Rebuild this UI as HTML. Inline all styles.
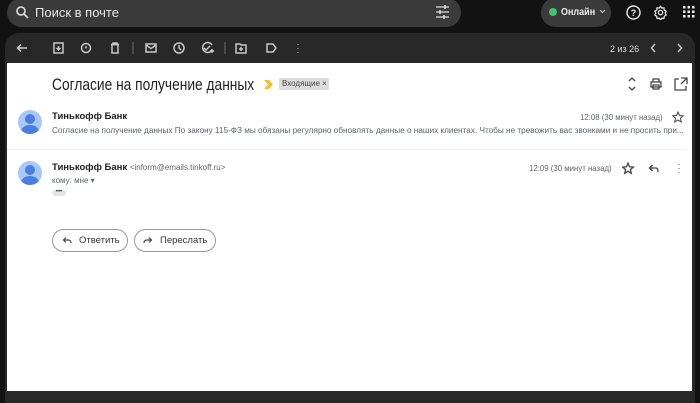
<!DOCTYPE html>
<html><head><meta charset="utf-8"><style>
*{margin:0;padding:0;box-sizing:border-box}
body{width:700px;height:403px;background:#121212;font-family:"Liberation Sans",Arial,sans-serif;position:relative;overflow:hidden}
.abs{position:absolute}
.search{left:7px;top:-2px;width:454px;height:29px;background:#3a3a3a;border-radius:15px}
.search .t{left:28px;top:7px;font-size:13px;color:#e8e8e8}
.pill{left:541px;top:-2px;width:70px;height:29px;background:#3a3a3a;border-radius:15px}
.panel{left:5px;top:33px;width:690px;height:370px;background:#282828;border-radius:14px 14px 0 0}
.white{left:7px;top:63px;width:685px;height:328px;background:#fff}
svg{position:absolute}
.ic{stroke:#c8c8c8;fill:none;stroke-width:1.5}
.g{color:#5f6368}
.sx{transform-origin:0 0;white-space:nowrap}
</style></head><body>
<div class="abs search">
<svg style="left:9px;top:8px" width="13" height="13" viewBox="0 0 13 13"><circle cx="5" cy="5" r="4" stroke="#e0e0e0" stroke-width="1.6" fill="none"/><path d="M8 8l4 4" stroke="#e0e0e0" stroke-width="1.6"/></svg>
<div class="abs t">Поиск в почте</div>
<svg style="left:428px;top:7px" width="15" height="14" viewBox="0 0 15 14"><path d="M1 2h13M1 7h13M1 12h13" stroke="#ddd" stroke-width="1.3"/><path d="M10 0v4M5 5v4M9 10v4" stroke="#ddd" stroke-width="1.6"/></svg>
</div>
<div class="abs pill">
<div class="abs" style="left:8px;top:10px;width:8px;height:8px;border-radius:50%;background:#3ec46d"></div>
<div class="abs sx" style="left:20px;top:9px;font-size:10px;color:#eee;font-weight:bold;transform:scaleX(0.9)">Онлайн</div>
<svg style="left:58px;top:11px" width="7" height="5"><path d="M1 1l2.5 2.5L6 1" stroke="#ccc" fill="none"/></svg>
</div>
<svg style="left:626px;top:5px" width="15" height="15" viewBox="0 0 15 15"><circle cx="7.5" cy="7.5" r="6.5" stroke="#eee" stroke-width="1.4" fill="none"/><text x="7.5" y="11" font-size="9" fill="#eee" text-anchor="middle" font-family="Liberation Sans" font-weight="bold">?</text></svg>
<svg style="left:653px;top:5px" width="15" height="15" viewBox="0 0 24 24"><path d="M12 2l2 3 3.5-.5.5 3.5 3 2-1.5 3 1.5 3-3 2-.5 3.5-3.5-.5-2 3-2-3-3.5.5-.5-3.5-3-2 1.5-3-1.5-3 3-2 .5-3.5 3.5.5z" stroke="#eee" stroke-width="2" fill="none"/><circle cx="12" cy="12" r="3.5" stroke="#eee" stroke-width="2" fill="none"/></svg>
<svg style="left:683px;top:6px" width="12" height="12"><g fill="#eee"><rect x="0" y="0" width="2.5" height="2.5"/><rect x="4.5" y="0" width="2.5" height="2.5"/><rect x="9" y="0" width="2.5" height="2.5"/><rect x="0" y="4.5" width="2.5" height="2.5"/><rect x="4.5" y="4.5" width="2.5" height="2.5"/><rect x="9" y="4.5" width="2.5" height="2.5"/><rect x="0" y="9" width="2.5" height="2.5"/><rect x="4.5" y="9" width="2.5" height="2.5"/><rect x="9" y="9" width="2.5" height="2.5"/></g></svg>
<div class="abs panel"></div>
<svg style="left:0;top:38px" width="700" height="20">
<g class="ic">
<path d="M27 10h-9M21 6.5L17.5 10 21 13.5"/>
<rect x="54" y="5" width="9" height="10"/><path d="M58.5 8v4M56.5 10l2 2 2-2"/>
<circle cx="86" cy="10" r="4.5"/><path d="M86 8v2.5"/>
<path d="M111 6.5h8M113 6v-1h4v1"/><rect x="112" y="6.5" width="6" height="8.5"/>
<path d="M133 4v12" stroke="#555"/>
<rect x="146" y="6" width="10" height="8"/><path d="M146 7l5 3.5 5-3.5"/>
<circle cx="179" cy="10" r="5"/><path d="M179 7v3l2 2"/>
<path d="M212 7a5 5 0 1 0 0 5"/><path d="M204 10l2 2 4-4M210 13h4M212 11v4"/>
<path d="M225 4v12" stroke="#555"/>
<path d="M236 6h4l1 1h5v8h-10z"/><path d="M241 9v4M239 11h4"/>
<path d="M267 6h6l3 4-3 4h-6z"/>
<path d="M298 6v0.5M298 10v0.5M298 14v0.5" stroke-width="2"/>
<path d="M655 6l-3.5 4 3.5 4M678 6l3.5 4-3.5 4"/>
</g>
<text x="610" y="14" font-size="9" fill="#ddd" font-family="Liberation Sans">2 из 26</text>
</svg>
<div class="abs white"></div>
<div class="abs sx" style="left:52px;top:75px;font-size:17px;color:#1f1f1f;transform:scaleX(0.81)">Согласие на получение данных</div>
<svg style="left:264px;top:80px" width="9" height="9"><path d="M0 0h5l4 4.5-4 4.5H0l4-4.5z" fill="#f2c12e"/></svg>
<div class="abs" style="left:279px;top:78px;width:50px;height:12px;background:#ddd;border-radius:2px;font-size:8px;color:#444;padding:1px 0 0 3px;white-space:nowrap;overflow:hidden">Входящие ×</div>
<svg style="left:620px;top:74px" width="72" height="20"><g stroke="#444" fill="none" stroke-width="1.3"><path d="M9 7l3-3 3 3M9 13l3 3 3-3"/><rect x="31" y="8" width="10" height="5"/><path d="M33 8V5h6v3M33 11h6v4h-6z"/><path d="M59 5h-4v11h11v-4M61 4h6v6M67 4l-6 6"/></g></svg>
<div class="abs" style="left:18px;top:110px;width:24px;height:24px;border-radius:50%;background:#a8c7fa;overflow:hidden"><div class="abs" style="left:7px;top:4px;width:10px;height:10px;border-radius:50%;background:#4b7ee0"></div><div class="abs" style="left:3px;top:15px;width:18px;height:14px;border-radius:50%;background:#4b7ee0"></div></div>
<div class="abs" style="left:52px;top:111px;font-size:9.5px;font-weight:bold;color:#1f1f1f">Тинькофф Банк</div>
<div class="abs g sx" style="left:580px;top:112px;font-size:8.5px;transform:scaleX(0.92)">12:08 (30 минут назад)</div>
<svg style="left:672px;top:111px" width="12" height="12" viewBox="0 0 24 24"><path d="M12 2l3 7 7.5.6-5.7 5 1.8 7.4L12 18l-6.6 4 1.8-7.4-5.7-5L9 9z" stroke="#444" stroke-width="2" fill="none"/></svg>
<div class="abs g sx" style="left:52px;top:125px;font-size:8.5px;transform:scaleX(0.965)">Согласие на получение данных По закону 115-ФЗ мы обязаны регулярно обновлять данные о наших клиентах. Чтобы не тревожить вас звонками и не просить при...</div>
<div class="abs" style="left:7px;top:149px;width:678px;height:1px;background:#eee"></div>
<div class="abs" style="left:18px;top:161px;width:24px;height:24px;border-radius:50%;background:#a8c7fa;overflow:hidden"><div class="abs" style="left:7px;top:4px;width:10px;height:10px;border-radius:50%;background:#4b7ee0"></div><div class="abs" style="left:3px;top:15px;width:18px;height:14px;border-radius:50%;background:#4b7ee0"></div></div>
<div class="abs" style="left:52px;top:162px;font-size:9.5px;color:#1f1f1f"><b>Тинькофф Банк</b> <span class="g" style="font-size:8px">&lt;inform@emails.tinkoff.ru&gt;</span></div>
<div class="abs g sx" style="left:529px;top:163px;font-size:8.5px;transform:scaleX(0.92)">12:09 (30 минут назад)</div>
<svg style="left:622px;top:162px" width="60" height="13"><g stroke="#444" stroke-width="1.3" fill="none"><path d="M6 1.2l1.5 3.6 3.8.3-2.9 2.5.9 3.7L6 9.3l-3.3 2 .9-3.7L.7 5.1l3.8-.3z"/><path d="M34 6h-6M30.5 3L27.5 6l3 3M34 6q2 0 2 4"/></g><path d="M57 2v.5M57 6v.5M57 10v.5" stroke="#444" stroke-width="1.8"/></svg>
<div class="abs g" style="left:52px;top:176px;font-size:8px">кому: мне ▾</div>
<div class="abs" style="left:52px;top:190px;width:14px;height:6px;background:#e4e4e4;border-radius:3px;font-size:6px;line-height:4px;text-align:center;color:#333">•••</div>
<div class="abs" style="left:52px;top:229px;width:76px;height:23px;border:1px solid #999;border-radius:12px;font-size:9.5px;color:#333;padding:5px 0 0 26px">Ответить</div>
<svg style="left:62px;top:235px" width="10" height="10"><path d="M9 8q0-3-3-3H2M4 2.5L1.5 5 4 7.5" stroke="#444" stroke-width="1.2" fill="none"/></svg>
<div class="abs" style="left:134px;top:229px;width:82px;height:23px;border:1px solid #999;border-radius:12px;font-size:9.5px;color:#333;padding:5px 0 0 25px">Переслать</div>
<svg style="left:143px;top:235px" width="10" height="10"><path d="M1 8q0-3 3-3h4M6 2.5L8.5 5 6 7.5" stroke="#444" stroke-width="1.2" fill="none"/></svg>
</body></html>
